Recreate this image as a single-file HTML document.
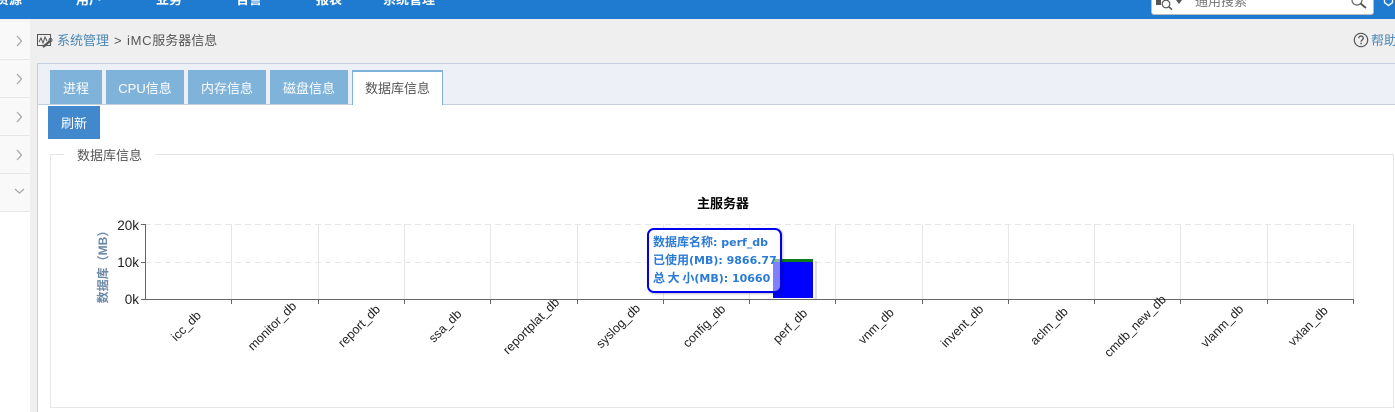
<!DOCTYPE html>
<html lang="zh"><head><meta charset="utf-8"><title>iMC服务器信息</title>
<style>
html,body{margin:0;padding:0;width:1395px;height:412px;overflow:hidden;background:#fff}
body{position:relative;font-family:"Liberation Sans","Noto Sans CJK SC",sans-serif;font-size:13px;color:#555}
.a{position:absolute;white-space:nowrap}
.nav{top:-10px;color:#fff;font-weight:bold;font-size:13px;line-height:20px}
.side{left:0;width:30px;height:37px;background:#f9f9f9;border-bottom:1px solid #e6e6e6}
.tab{top:70px;height:34px;background:#7fb3d9;color:#fff;text-align:center;line-height:37px;font-size:13px}
.c{font-size:12px;line-height:0}
</style></head><body>
<div class="a" style="left:0;top:0;width:1395px;height:19px;background:#1f7bd0"></div>
<div class="a nav" style="left:-4px">资源</div>
<div class="a nav" style="left:76px">用户</div>
<div class="a nav" style="left:156px">业务</div>
<div class="a nav" style="left:236px">告警</div>
<div class="a nav" style="left:316px">报表</div>
<div class="a nav" style="left:383px">系统管理</div>

<div class="a" style="left:1151px;top:-2px;width:221px;height:15px;background:#fff;border:1px solid #bbb;border-radius:0 0 3px 3px;overflow:hidden">
<div class="a" style="left:43px;top:-5px;font-size:13px;color:#777;line-height:16px">通用搜索</div>
</div>
<svg class="a" style="left:1151px;top:0" width="244" height="19" viewBox="0 0 244 19" fill="none">
<rect x="5" y="0" width="5" height="5" fill="#555"/>
<circle cx="15" cy="4" r="3.800" stroke="#555" stroke-width="1.200"/><path d="M18 7l3 2.500" stroke="#555" stroke-width="1.500"/>
<path d="M25 0h6l-3 4z" fill="#555"/>
<circle cx="206" cy="0" r="5" stroke="#666" stroke-width="1.200"/><path d="M209.500 3.500l5.500 4.500" stroke="#555" stroke-width="1.800"/>
<path d="M233.500 0v2.500l4 3 4-3v-2.500" stroke="#fff" stroke-width="1.300" fill="#1f7bd0"/>
</svg>

<div class="a" style="left:0;top:19px;width:1395px;height:3px;background:#f4f4f4"></div>
<div class="a side" style="top:22px"></div>
<div class="a side" style="top:60px"></div>
<div class="a side" style="top:98px"></div>
<div class="a side" style="top:136px"></div>
<div class="a side" style="top:174px"></div>
<svg class="a" style="left:0;top:22px" width="30" height="190" fill="none" stroke="#a8a8a8" stroke-width="1.300">
<path d="M17 14l4.500 5-4.500 5M17 52l4.500 5-4.500 5M17 90l4.500 5-4.500 5M17 128l4.500 5-4.500 5M15 167l4.500 4 4.500-4"/>
</svg>

<div class="a" style="left:30px;top:19px;width:1365px;height:44px;background:#efefef"></div>
<div class="a" style="left:30px;top:22px;width:7px;height:390px;background:#efefef"></div>
<div class="a" style="left:37px;top:63px;width:1358px;height:349px;background:#fff;border-left:1px solid #c5d0de;border-top:1px solid #c5d0de;box-sizing:border-box"></div>
<div class="a" style="left:38px;top:64px;width:1357px;height:41px;background:#edf0f6;border-bottom:1px solid #c5d0de;box-sizing:border-box"></div>

<svg class="a" style="left:36px;top:32px" width="18" height="18" fill="none" stroke="#555">
<rect x="1.500" y="2.500" width="13" height="11"/><path d="M3 10l2-4 2 5 2-6 2 4" stroke-width="1"/><path d="M7 15l7-6" stroke-width="2.200"/><circle cx="14.500" cy="8" r="1.500" stroke-width="1"/>
</svg>
<div class="a" style="left:57px;top:32px;line-height:18px;color:#4a87b5">系统管理</div>
<div class="a" style="left:114px;top:32px;line-height:18px">&gt;</div>
<div class="a" style="left:127px;top:32px;line-height:18px"><span style="letter-spacing:.7px">iMC</span>服务器信息</div>
<svg class="a" style="left:1353px;top:32px" width="16" height="16" fill="none"><circle cx="8" cy="8" r="6.700" stroke="#555" stroke-width="1.200"/><path d="M5.800 6.300c0-3 4.500-3 4.500 0 0 1.700-2.300 1.700-2.300 3.500" stroke="#555" stroke-width="1.300"/><rect x="7.300" y="10.800" width="1.500" height="1.500" fill="#555"/></svg>
<div class="a" style="left:1371px;top:32px;line-height:18px;color:#4a87b5">帮助</div>

<div class="a tab" style="left:50px;width:52px">进程</div>
<div class="a tab" style="left:106px;width:78px">CPU信息</div>
<div class="a tab" style="left:188px;width:78px">内存信息</div>
<div class="a tab" style="left:270px;width:78px">磁盘信息</div>
<div class="a tab" style="left:352px;top:70px;width:91px;height:35px;background:#fff;color:#555;border:1px solid #7fb3d9;border-top-width:2px;border-bottom:0;box-sizing:border-box;line-height:34px;text-align:center">数据库信息</div>

<div class="a" style="left:48px;top:106px;width:52px;height:33px;background:#4189cc;color:#fff;text-align:center;line-height:36px">刷新</div>

<div class="a" style="left:50px;top:154px;width:1344px;height:254px;border:1px solid #e6e6e6;box-sizing:border-box"></div>
<div class="a" style="left:64px;top:147px;width:91px;height:16px;background:#fff"></div>
<div class="a" style="left:77px;top:147px;line-height:18px">数据库信息</div>

<svg class="a" style="left:0;top:0" width="1395" height="412" font-family="'Liberation Sans','Noto Sans CJK SC',sans-serif">
<text x="723" y="208" text-anchor="middle" font-size="13" font-weight="bold" fill="#000">主服务器</text>
<g stroke="#e6e6e6" stroke-width="1">
<path d="M145 224.500H1353M145 262.500H1353" stroke-dasharray="6 4"/>
<path d="M231.500 224V299M318.500 224V299M404.500 224V299M490.500 224V299M577.500 224V299M663.500 224V299M749.500 224V299M835.500 224V299M922.500 224V299M1008.500 224V299M1094.500 224V299M1180.500 224V299M1267.500 224V299M1353.500 224V299"/>
</g>
<g stroke="#666" stroke-width="1" fill="none">
<path d="M145.500 224V299.500H1353.500"/>
<path d="M141 224.500H145M141 262.500H145M141 299.500H145"/>
<path d="M231.500 299V304M318.500 299V304M404.500 299V304M490.500 299V304M577.500 299V304M663.500 299V304M749.500 299V304M835.500 299V304M922.500 299V304M1008.500 299V304M1094.500 299V304M1180.500 299V304M1267.500 299V304M1353.500 299V304"/>
</g>
<g font-size="13.500" fill="#222" text-anchor="end">
<text x="139" y="230">20k</text><text x="139" y="267">10k</text><text x="139" y="304">0k</text>
</g>
<text transform="translate(107,264) rotate(-90)" text-anchor="middle" font-size="12" font-weight="bold" fill="#6b88a8">数据库（MB）</text>
<g font-size="12.500" fill="#222" text-anchor="middle">
<text transform="translate(189,329) rotate(-45)">icc_db</text>
<text transform="translate(275,329) rotate(-45)">monitor_db</text>
<text transform="translate(362,329) rotate(-45)">report_db</text>
<text transform="translate(448,329) rotate(-45)">ssa_db</text>
<text transform="translate(534,329) rotate(-45)">reportplat_db</text>
<text transform="translate(621,329) rotate(-45)">syslog_db</text>
<text transform="translate(707,329) rotate(-45)">config_db</text>
<text transform="translate(793,329) rotate(-45)">perf_db</text>
<text transform="translate(879,329) rotate(-45)">vnm_db</text>
<text transform="translate(965,329) rotate(-45)">invent_db</text>
<text transform="translate(1052,329) rotate(-45)">aclm_db</text>
<text transform="translate(1138,329) rotate(-45)">cmdb_new_db</text>
<text transform="translate(1225,329) rotate(-45)">vlanm_db</text>
<text transform="translate(1311,329) rotate(-45)">vxlan_db</text>
</g>
<rect x="815" y="261" width="2" height="38" fill="#000" opacity=".12"/>
<rect x="773" y="262" width="40" height="36" fill="#0000ff"/>
<rect x="773" y="259" width="40" height="3" fill="#0a7a1a"/>
</svg>

<div class="a" style="left:647px;top:228px;width:135px;height:65px;box-sizing:border-box;border:2px solid #0000ee;border-radius:7px;background:rgba(255,255,255,.5);box-shadow:1px 1px 2px rgba(0,0,0,.25)"></div>
<div class="a" style="left:649px;top:230px;width:124px;height:61px;background:rgba(255,255,255,.8);border-radius:5px 0 0 5px"></div>
<div class="a" style="left:653px;top:234px;font-family:'DejaVu Sans','Noto Sans CJK SC',sans-serif;font-size:11px;font-weight:bold;line-height:18px;color:#2a7bd6"><span class="c">数据库名称</span>: perf_db<br><span class="c">已使用</span>(MB): 9866.77<br><span class="c" style="word-spacing:-1.500px">总 大 小</span>(MB): 10660</div>
</body></html>
